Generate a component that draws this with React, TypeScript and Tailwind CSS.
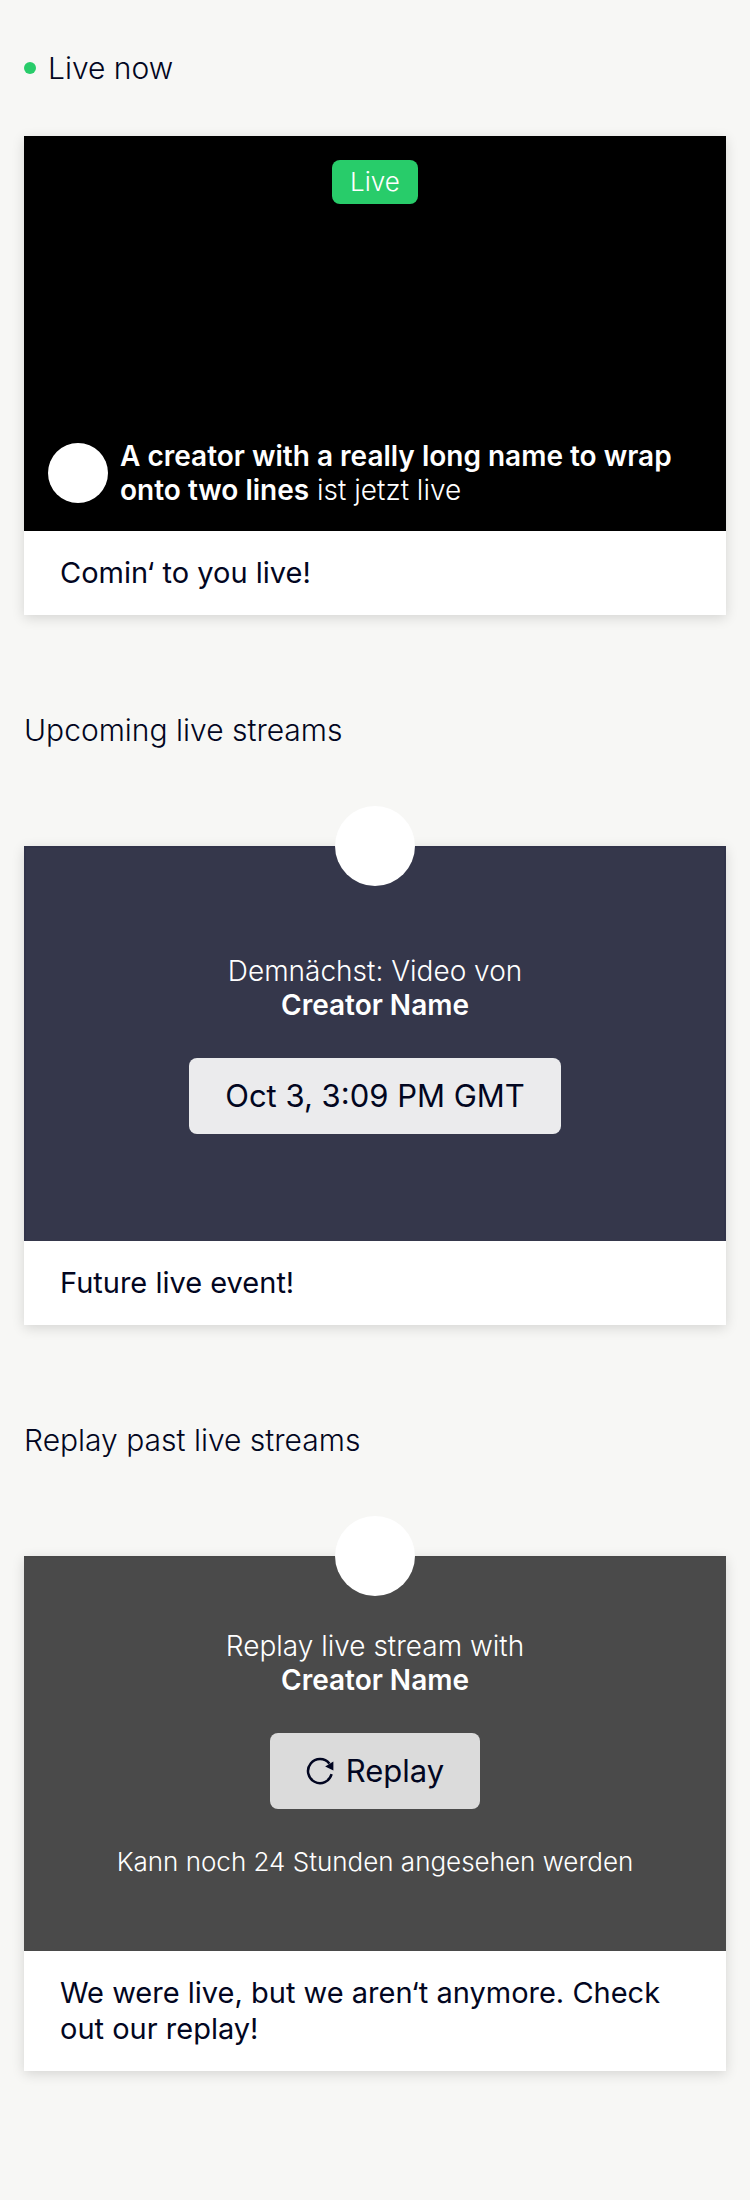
import type { ReactNode } from "react";

function Heading({ children, live = false }: { children: ReactNode; live?: boolean }) {
  return (
    <h2 className="flex items-center gap-3 text-[30px] leading-10 font-light">
      {live && <span className="size-3 rounded-full bg-[#28cc6a]" />}
      {children}
    </h2>
  );
}

function Card({ children, caption }: { children: ReactNode; caption: string }) {
  return (
    <article className="bg-white shadow-[0_3px_12px_rgba(0,0,0,0.14)]">
      <div className="relative aspect-video">{children}</div>
      <p className="px-9 py-6 text-[29px] leading-9">{caption}</p>
    </article>
  );
}

function Avatar() {
  return <span className="absolute -top-10 left-1/2 size-20 -translate-x-1/2 rounded-full bg-white" />;
}

function ReplayIcon() {
  return (
    <svg viewBox="0 0 28 28" className="size-7" aria-hidden="true">
      <path d="M25.6 17.2A12 12 0 1 1 23.4 6.6" fill="none" stroke="currentColor" strokeWidth="2.5" />
      <path d="M27.4 4.6V13.6L19.2 9.4Z" fill="currentColor" />
    </svg>
  );
}

export default function App() {
  return (
    <main className="min-h-screen bg-[#f7f7f5] px-6 pt-12 pb-24 font-['Inter',sans-serif] text-[#020621]">
      <section>
        <Heading live>Live now</Heading>
        <div className="mt-12">
          <Card caption="Comin‘ to you live!">
            <div className="flex h-full flex-col items-center justify-between bg-black p-6 text-white">
              <span className="rounded-lg bg-[#28cc6a] px-[18px] py-1 text-[26px] leading-9 font-light">Live</span>
              <div className="flex w-full items-center gap-3">
                <span className="size-15 shrink-0 rounded-full bg-white" />
                <p className="text-[28px] leading-[34px] font-light">
                  <strong className="font-semibold">A creator with a really long name to wrap onto two lines</strong> ist
                  jetzt live
                </p>
              </div>
            </div>
          </Card>
        </div>
      </section>

      <section className="mt-[95px]">
        <Heading>Upcoming live streams</Heading>
        <div className="mt-24">
          <Card caption="Future live event!">
            <div className="flex h-full flex-col items-center justify-center gap-9 border-x-2 border-t-2 border-[#313349] bg-[#35374b] text-center text-white">
              <p className="text-[28px] leading-[34px] font-light">
                Demnächst: Video von
                <br />
                <strong className="font-semibold">Creator Name</strong>
              </p>
              <time className="rounded-lg bg-[#ebebed] px-9 py-[18px] text-[31px] leading-10 text-[#020621]">
                Oct 3, 3:09 PM GMT
              </time>
            </div>
            <Avatar />
          </Card>
        </div>
      </section>

      <section className="mt-[95px]">
        <Heading>Replay past live streams</Heading>
        <div className="mt-24">
          <Card caption="We were live, but we aren‘t anymore. Check out our replay!">
            <div className="flex h-full flex-col items-center justify-center gap-9 border-t-2 border-[#484848] bg-[#4a4a4a] text-center text-white">
              <p className="text-[28px] leading-[34px] font-light">
                Replay live stream with
                <br />
                <strong className="font-semibold">Creator Name</strong>
              </p>
              <button
                type="button"
                className="flex items-center gap-3 rounded-lg bg-[#dbdbdb] px-9 py-[18px] text-[31px] leading-10 text-[#020621]"
              >
                <ReplayIcon />
                Replay
              </button>
              <p className="text-[26px] leading-[34px] font-light">Kann noch 24 Stunden angesehen werden</p>
            </div>
            <Avatar />
          </Card>
        </div>
      </section>
    </main>
  );
}
